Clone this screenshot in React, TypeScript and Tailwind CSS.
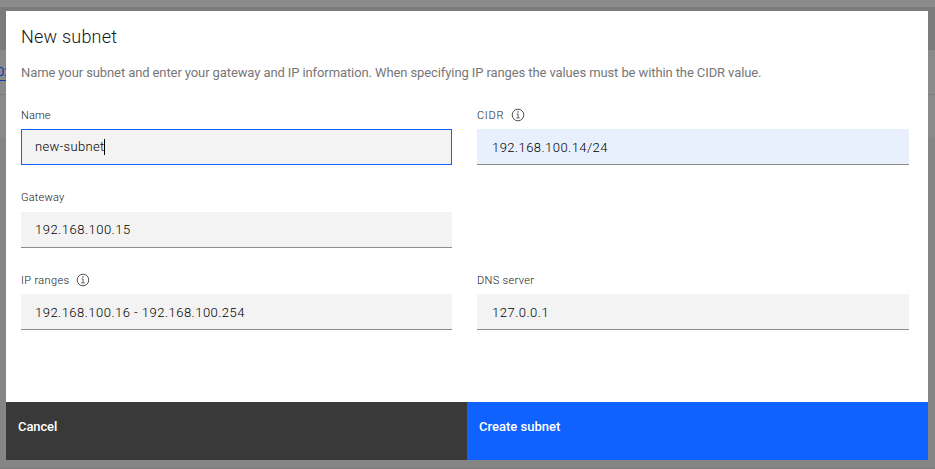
import React from "react";

function InfoIcon() {
  return (
    <svg width="14" height="14" viewBox="0 0 14 14" fill="none" className="shrink-0">
      <circle cx="7" cy="7" r="5.8" stroke="#4a4a4a" strokeWidth="0.95" />
      <path d="M5.6 6H7.1V9.7M5.2 9.9H8.8" stroke="#4a4a4a" strokeWidth="0.85" />
      <circle cx="7" cy="4" r="0.75" fill="#4a4a4a" />
    </svg>
  );
}

type FieldProps = {
  label: string;
  labelClass: string;
  value: string;
  valueClass: string;
  boxClass?: string;
  info?: boolean;
  caret?: boolean;
};

function Field({ label, labelClass, value, valueClass, boxClass, info, caret }: FieldProps) {
  return (
    <div className="flex flex-col">
      <div className="flex h-4 items-center gap-[7px] text-[11px] font-light leading-4 text-[#161616]">
        <span className={`whitespace-nowrap pt-px ${labelClass}`}>{label}</span>
        {info && <InfoIcon />}
      </div>
      <div
        className={`mt-1.5 flex h-9 items-center text-[13px] font-light leading-4 text-[#000000] ${
          boxClass ?? "border-b border-[#8d8d8d] bg-[#f3f3f3] pl-3.5 pt-0.5"
        }`}
      >
        <span className={`whitespace-nowrap ${valueClass}`}>{value}</span>
        {caret && <span className="h-4 w-px bg-black" />}
      </div>
    </div>
  );
}

export default function App() {
  return (
    <div className="relative h-[469px] w-[935px] overflow-hidden bg-[#858585] font-['Roboto','Liberation_Sans',sans-serif]">
      <div className="flex h-full flex-col">
        <div className="h-[7px] bg-[#8b8b8b]" />
        <div className="h-[43px] bg-[#7b7b7b]" />
        <div className="flex h-[45px] items-center border-b border-[#7c7c7c] bg-[#8a8a8a]">
          <span className="-ml-[3px] text-[13px] text-[#0b3da8] underline underline-offset-4">02</span>
        </div>
        <div className="h-[43px] bg-[#8a8a8a]" />
        <div className="flex-1 border-b border-[#7c7c7c]" />
      </div>

      <div className="absolute left-[6px] top-[11px] flex h-[449px] w-[922px] flex-col bg-white">
        <div className="flex-1 pl-[15px] pr-[19px] pt-3.5">
          <h1 className="h-6 whitespace-nowrap text-[18px] font-light leading-6 tracking-[0.22px] text-[#161616]">
            New subnet
          </h1>
          <p className="mt-3.5 h-5 whitespace-nowrap text-[13px] leading-5 tracking-[-0.1px] text-[#777777]">
            Name your subnet and enter your gateway and IP information. When specifying IP ranges the values must be
            within the CIDR value.
          </p>
          <div className="mt-6 grid grid-cols-[431px_432px] gap-x-[25px] gap-y-[24.5px]">
            <Field
              label="Name"
              labelClass="tracking-[0.1px]"
              value="new-subnet"
              valueClass="tracking-[0.3px]"
              boxClass="border border-[#0f62fe] bg-[#f3f3f3] pl-[13px]"
              caret
            />
            <Field
              label="CIDR"
              labelClass="tracking-[0.7px]"
              info
              value="192.168.100.14/24"
              valueClass="tracking-[0.45px]"
              boxClass="border-b border-[#8d8d8d] bg-[#e8f0fe] pl-[15px] pt-0.5"
            />
            <Field label="Gateway" labelClass="tracking-[0.2px]" value="192.168.100.15" valueClass="tracking-[0.5px]" />
            <div />
            <Field
              label="IP ranges"
              labelClass="tracking-[0.35px]"
              info
              value="192.168.100.16 - 192.168.100.254"
              valueClass="tracking-[0.48px]"
            />
            <Field
              label="DNS server"
              labelClass="tracking-[0.35px]"
              value="127.0.0.1"
              valueClass="tracking-[0.5px]"
              boxClass="border-b border-[#8d8d8d] bg-[#f3f3f3] pl-[15px] pt-0.5"
            />
          </div>
        </div>
        <div className="flex h-[58px] text-[13px] leading-4 text-white">
          <button className="flex w-1/2 items-start whitespace-nowrap bg-[#393939] pl-3 pt-[17px] font-medium tracking-[-0.1px]">
            Cancel
          </button>
          <button className="flex w-1/2 items-start whitespace-nowrap bg-[#0f62fe] pl-3 pt-[17px] font-medium">
            Create subnet
          </button>
        </div>
      </div>
    </div>
  );
}
